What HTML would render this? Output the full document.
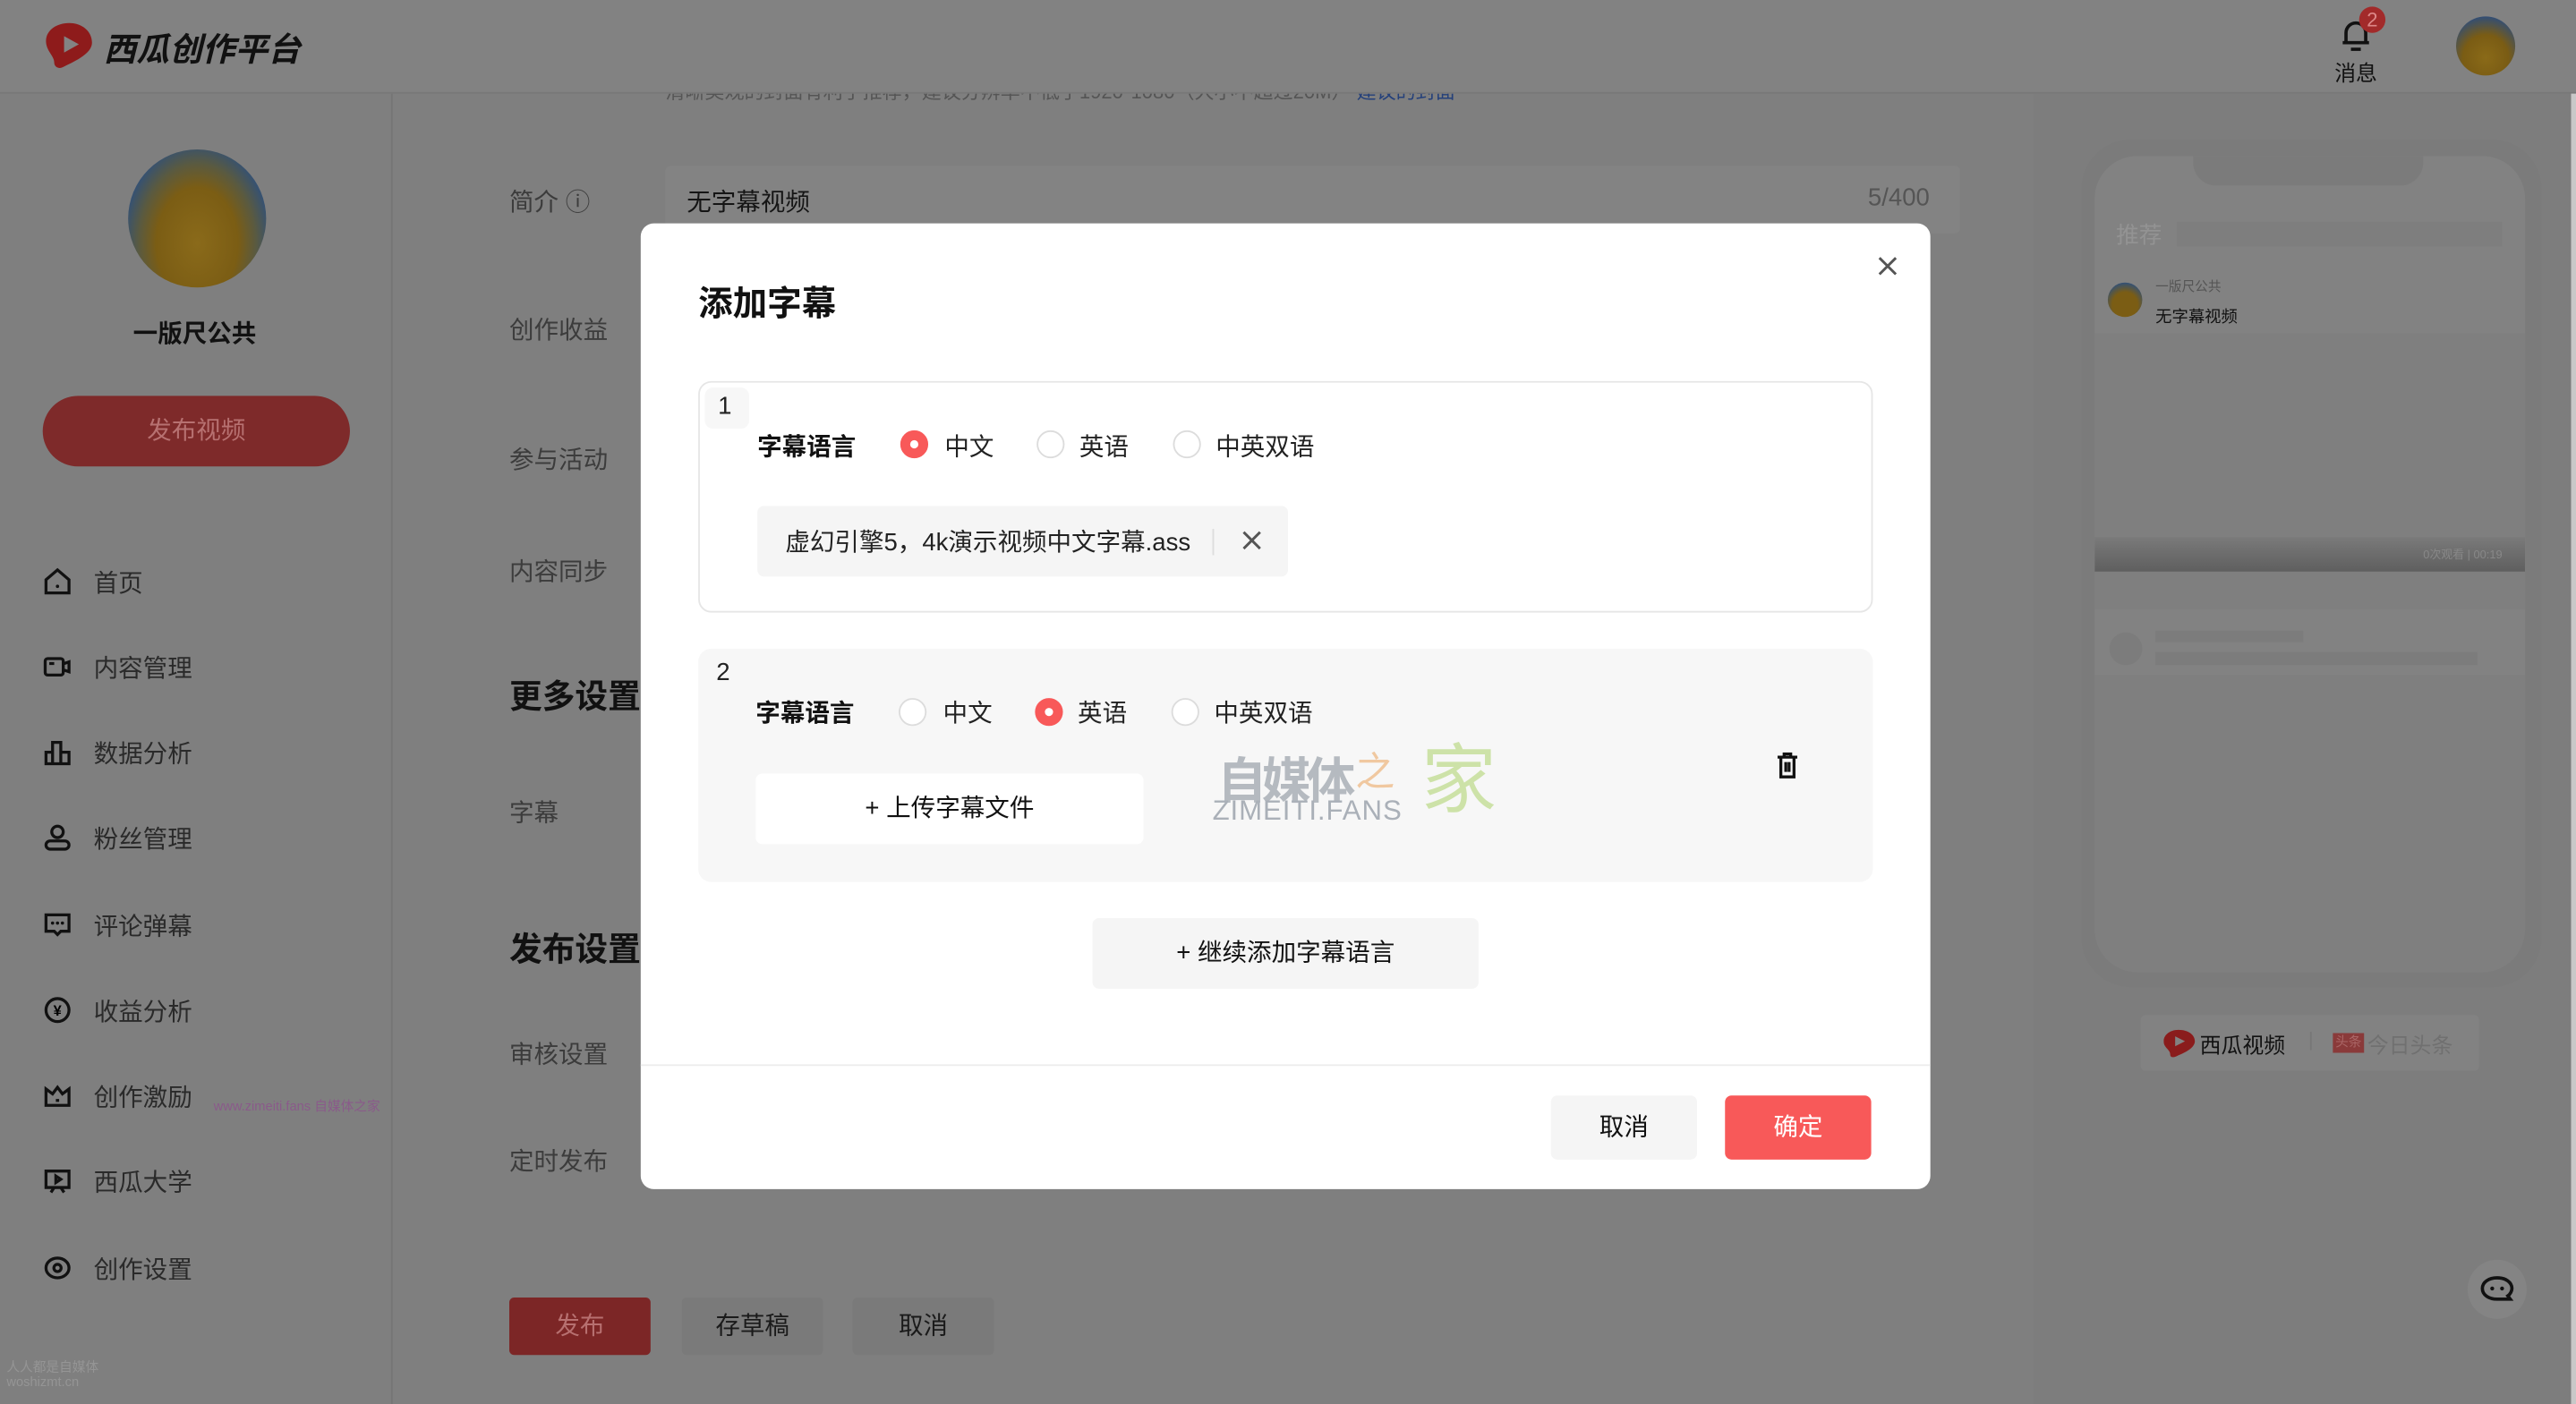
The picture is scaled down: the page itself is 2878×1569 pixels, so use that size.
<!DOCTYPE html>
<html><head><meta charset="utf-8">
<style>
*{margin:0;padding:0;box-sizing:border-box}
html,body{width:2878px;height:1568px;overflow:hidden;background:#7f7f7f}
#w{position:absolute;left:0;top:0;width:1568px;height:855px;transform:scale(1.83546);transform-origin:0 0;font-family:"Liberation Sans","Noto Sans CJK SC",sans-serif;color:#141414;background:#7f7f7f}
.a{position:absolute;white-space:nowrap}
.lbl{font-size:15px;color:#3c3c3c}
.mi{font-size:15px;color:#2a2a2a}
.ic{position:absolute;left:26px;width:18px;height:18px}
.radio{position:absolute;width:17px;height:17px;border-radius:50%;border:1px solid #dcdcdc;background:#fff}
.radio.on{background:#f85959;border-color:#f85959}
.radio.on:after{content:"";position:absolute;left:5px;top:5px;width:5px;height:5px;border-radius:50%;background:#fff}
.t15{font-size:15px;color:#222}
</style></head><body><div id="w">
<!-- clipped hint text (behind header) -->
<div class="a" style="left:405px;top:47px;font-size:12px;color:#555">清晰美观的封面有利于推荐，建议分辨率不低于1920*1080（大小不超过20M） <span style="color:#24407a">建议的封面</span></div>
<!-- top bar -->
<div class="a" style="left:0;top:0;width:1568px;height:57px;background:#828282;border-bottom:1px solid #787878"></div>
<svg class="a" style="left:27px;top:13px" width="32" height="30" viewBox="0 0 32 30"><path d="M15 1C8 1 1 5 1 12c0 6 5 9 5 13 0 3 3 4 5 3 6-3 18-8 18-15C29 6 23 1 15 1z" fill="#8e1b1b"/><path d="M12 9l9 5-9 5z" fill="#838383"/></svg>
<div class="a" style="left:63px;top:14px;font-size:20px;font-weight:bold;color:#111;font-style:italic">西瓜创作平台</div>
<svg class="a" style="left:1424px;top:11px" width="20" height="22" viewBox="0 0 20 22"><path d="M4 15V9a6 6 0 0 1 12 0v6M2 15h16M7 19h6" stroke="#111" stroke-width="2" fill="none"/></svg>
<div class="a" style="left:1436px;top:4px;width:16px;height:16px;border-radius:50%;background:#a22a2a;color:#d88;font-size:12px;text-align:center;line-height:16px">2</div>
<div class="a" style="left:1421px;top:34px;font-size:13px;color:#111">消息</div>
<div class="a" style="left:1495px;top:10px;width:36px;height:36px;border-radius:50%;background:radial-gradient(circle at 50% 70%,#8a6a18 0,#7a5c14 45%,#344e72 80%)"></div>
<!-- sidebar -->
<div class="a" style="left:238px;top:57px;width:1px;height:798px;background:#757575"></div>
<div class="a" style="left:78px;top:91px;width:84px;height:84px;border-radius:50%;background:radial-gradient(ellipse at 50% 68%,#8a6a1a 0,#7b5d14 42%,#5a5a40 60%,#30507a 78%)"></div>
<div class="a" style="left:81px;top:192px;font-size:15px;font-weight:bold;color:#111">一版尺公共</div>
<div class="a" style="left:26px;top:241px;width:187px;height:43px;border-radius:22px;background:#7e2a2a;color:#b77171;font-size:15px;text-align:center;line-height:43px">发布视频</div>
<svg class="ic" style="top:345px" viewBox="0 0 18 18"><path d="M2 8l7-6 7 6v8H2z" stroke="#111" stroke-width="1.8" fill="none"/><circle cx="9" cy="12" r="1" fill="#111"/></svg>
<svg class="ic" style="top:397px" viewBox="0 0 18 18"><rect x="1.5" y="4" width="11" height="10" rx="1.5" stroke="#111" stroke-width="1.8" fill="none"/><path d="M13 7l3-1v6l-3-1M4 7h3" stroke="#111" stroke-width="1.8" fill="none"/></svg>
<svg class="ic" style="top:449px" viewBox="0 0 18 18"><path d="M2 16V9h4V3h5v6h5v7z M6 9v7M11 9v7" stroke="#111" stroke-width="1.8" fill="none"/></svg>
<svg class="ic" style="top:501px" viewBox="0 0 18 18"><circle cx="9" cy="5.5" r="3.5" stroke="#111" stroke-width="1.8" fill="none"/><rect x="2" y="11" width="14" height="5" rx="2.5" stroke="#111" stroke-width="1.8" fill="none"/></svg>
<svg class="ic" style="top:554px" viewBox="0 0 18 18"><path d="M2 3h14v10h-5l-2 2-2-2H2z" stroke="#111" stroke-width="1.8" fill="none"/><circle cx="6" cy="8" r="1" fill="#111"/><circle cx="9" cy="8" r="1" fill="#111"/><circle cx="12" cy="8" r="1" fill="#111"/></svg>
<svg class="ic" style="top:606px" viewBox="0 0 18 18"><circle cx="9" cy="9" r="7" stroke="#111" stroke-width="1.8" fill="none"/><text x="9" y="12.5" font-size="9" text-anchor="middle" font-family="Liberation Sans" font-weight="bold">¥</text></svg>
<svg class="ic" style="top:658px" viewBox="0 0 18 18"><path d="M2 5l4 3 3-4 3 4 4-3v10H2z M8 12h2" stroke="#111" stroke-width="1.8" fill="none"/></svg>
<svg class="ic" style="top:710px" viewBox="0 0 18 18"><path d="M2 3h14v10H2z M5 16l2-3M13 16l-2-3 M8 6l3 2-3 2z" stroke="#111" stroke-width="1.8" fill="none"/></svg>
<svg class="ic" style="top:763px" viewBox="0 0 18 18"><ellipse cx="9" cy="9" rx="7" ry="6" stroke="#111" stroke-width="1.8" fill="none"/><circle cx="9" cy="9" r="2.2" stroke="#111" stroke-width="1.8" fill="none"/></svg>
<div class="a mi" style="left:57px;top:344px">首页</div>
<div class="a mi" style="left:57px;top:396px">内容管理</div>
<div class="a mi" style="left:57px;top:448px">数据分析</div>
<div class="a mi" style="left:57px;top:500px">粉丝管理</div>
<div class="a mi" style="left:57px;top:553px">评论弹幕</div>
<div class="a mi" style="left:57px;top:605px">收益分析</div>
<div class="a mi" style="left:57px;top:657px">创作激励</div>
<div class="a mi" style="left:57px;top:709px">西瓜大学</div>
<div class="a mi" style="left:57px;top:762px">创作设置</div>
<div class="a" style="left:130px;top:668px;font-size:8px;color:#8a5a8a">www.zimeiti.fans 自媒体之家</div>
<div class="a" style="left:4px;top:828px;font-size:8px;color:#959595;line-height:9px">人人都是自媒体<br>woshizmt.cn</div>
<!-- main -->
<div class="a lbl" style="left:310px;top:112px">简介 ⓘ</div>
<div class="a" style="left:405px;top:101px;width:788px;height:41px;background:#838383;border-radius:3px"></div>
<div class="a" style="left:418px;top:112px;font-size:15px;color:#151515">无字幕视频</div>
<div class="a" style="left:1137px;top:112px;font-size:15px;color:#555">5/400</div>
<div class="a lbl" style="left:310px;top:190px">创作收益</div>
<div class="a lbl" style="left:310px;top:269px">参与活动</div>
<div class="a lbl" style="left:310px;top:337px">内容同步</div>
<div class="a" style="left:310px;top:408px;font-size:20px;font-weight:bold;color:#111">更多设置</div>
<div class="a lbl" style="left:310px;top:484px">字幕</div>
<div class="a" style="left:310px;top:562px;font-size:20px;font-weight:bold;color:#111">发布设置</div>
<div class="a lbl" style="left:310px;top:631px">审核设置</div>
<div class="a lbl" style="left:310px;top:696px">定时发布</div>
<div class="a" style="left:310px;top:790px;width:86px;height:35px;background:#7c2626;border-radius:3px;color:#b77070;font-size:15px;text-align:center;line-height:35px">发布</div>
<div class="a" style="left:415px;top:790px;width:86px;height:35px;background:#7a7a7a;border-radius:3px;color:#1a1a1a;font-size:15px;text-align:center;line-height:35px">存草稿</div>
<div class="a" style="left:519px;top:790px;width:86px;height:35px;background:#7a7a7a;border-radius:3px;color:#1a1a1a;font-size:15px;text-align:center;line-height:35px">取消</div>
<!-- right panel -->
<div class="a" style="left:1238px;top:57px;width:327px;height:798px;background:#7d7d7d"></div>
<div class="a" style="left:1565px;top:57px;width:3px;height:798px;background:#c8c8c8"></div>
<div class="a" style="left:1267px;top:85px;width:280px;height:516px;border-radius:30px;background:#7b7b7b"></div>
<div class="a" style="left:1275px;top:95px;width:262px;height:497px;border-radius:26px;background:#7f7f7f;overflow:hidden">
 <div class="a" style="left:0;top:0;width:262px;height:108px;background:#828282"></div>
 <div class="a" style="left:60px;top:-4px;width:140px;height:22px;border-radius:0 0 14px 14px;background:#7b7b7b"></div>
 <div class="a" style="left:13px;top:38px;font-size:14px;color:#939393">推荐</div>
 <div class="a" style="left:50px;top:40px;width:198px;height:15px;background:#7e7e7e"></div>
 <div class="a" style="left:8px;top:77px;width:21px;height:21px;border-radius:50%;background:radial-gradient(circle at 50% 65%,#7b5d14 0,#7b5d14 45%,#30507a 80%)"></div>
 <div class="a" style="left:37px;top:74px;font-size:8px;color:#555">一版尺公共</div>
 <div class="a" style="left:37px;top:89px;font-size:10px;color:#111">无字幕视频</div>
 <div class="a" style="left:0;top:232px;width:262px;height:21px;background:linear-gradient(#7a7a7a,#5f5f5f)"></div>
 <div class="a" style="left:200px;top:238px;font-size:7px;color:#888">0次观看 | 00:19</div>
 <div class="a" style="left:0;top:276px;width:262px;height:40px;background:#828282"></div>
 <div class="a" style="left:9px;top:290px;width:20px;height:20px;border-radius:50%;background:#7c7c7c"></div>
 <div class="a" style="left:37px;top:289px;width:90px;height:7px;background:#7c7c7c"></div>
 <div class="a" style="left:37px;top:302px;width:196px;height:8px;background:#7c7c7c"></div>
</div>
<div class="a" style="left:1303px;top:618px;width:206px;height:34px;background:#828282;border-radius:3px"></div>
<svg class="a" style="left:1317px;top:626px" width="20" height="18" viewBox="0 0 20 18"><path d="M9 1C4 1 0 4 0 8c0 4 4 5 4 8 0 2 2 2 4 1 5-2 11-5 11-9C19 4 15 1 9 1z" fill="#8a1c1c"/><path d="M7 5l6 3-6 3z" fill="#828282"/></svg>
<div class="a" style="left:1339px;top:626px;font-size:13px;color:#111">西瓜视频</div>
<div class="a" style="left:1405px;top:626px;font-size:12px;color:#777">|</div>
<div class="a" style="left:1420px;top:629px;width:19px;height:12px;background:#8a3a3a;font-size:8px;color:#a66;line-height:12px;text-align:center">头条</div>
<div class="a" style="left:1441px;top:626px;font-size:13px;color:#707070">今日头条</div>
<div class="a" style="left:1502px;top:767px;width:36px;height:36px;border-radius:50%;background:#848484"></div>
<svg class="a" style="left:1509px;top:776px" width="22" height="18" viewBox="0 0 22 18"><path d="M11 2C6 2 2 4.5 2 8.5S6 15 11 15h8l-1.5-2C19 12 20 10 20 8.5 20 4.5 16 2 11 2z" stroke="#111" stroke-width="2" fill="none"/><circle cx="8" cy="8.5" r="1.2" fill="#111"/><circle cx="14" cy="8.5" r="1.2" fill="#111"/></svg>
<!-- modal -->
<div class="a" style="left:390px;top:136px;width:785px;height:588px;background:#fff;border-radius:8px">
 <div class="a" style="left:35px;top:33px;font-size:21px;font-weight:bold;color:#111">添加字幕</div>
 <svg class="a" style="left:752px;top:19px" width="14" height="14" viewBox="0 0 14 14"><path d="M2 2l10 10M12 2L2 12" stroke="#555" stroke-width="1.6"/></svg>
 <div class="a" style="left:35px;top:96px;width:715px;height:141px;border:1px solid #e6e6e6;border-radius:8px">
  <div class="a" style="left:3px;top:3px;width:27px;height:25px;background:#f7f7f7;border-radius:5px;font-size:15px;color:#222;padding-left:8px;line-height:23px">1</div>
  <div class="a" style="left:35px;top:28px;font-size:15px;font-weight:bold;color:#111">字幕语言</div>
  <div class="radio on" style="left:122px;top:29px"></div><div class="a t15" style="left:149px;top:28px">中文</div>
  <div class="radio" style="left:205px;top:29px"></div><div class="a t15" style="left:231px;top:28px">英语</div>
  <div class="radio" style="left:288px;top:29px"></div><div class="a t15" style="left:314px;top:28px">中英双语</div>
  <div class="a" style="left:35px;top:75px;width:323px;height:43px;background:#f5f5f5;border-radius:4px"></div>
  <div class="a" style="left:52px;top:86px;font-size:15px;color:#222">虚幻引擎5，4k演示视频中文字幕.ass</div>
  <div class="a" style="left:312px;top:89px;width:1px;height:16px;background:#ddd"></div>
  <svg class="a" style="left:330px;top:90px" width="12" height="12" viewBox="0 0 12 12"><path d="M1 1l10 10M11 1L1 11" stroke="#555" stroke-width="1.6"/></svg>
 </div>
 <div class="a" style="left:35px;top:259px;width:715px;height:142px;background:#f7f7f7;border-radius:8px">
  <div class="a" style="left:11px;top:6px;font-size:15px;color:#222">2</div>
  <div class="a" style="left:35px;top:28px;font-size:15px;font-weight:bold;color:#111">字幕语言</div>
  <div class="radio" style="left:122px;top:30px"></div><div class="a t15" style="left:149px;top:28px">中文</div>
  <div class="radio on" style="left:205px;top:30px"></div><div class="a t15" style="left:231px;top:28px">英语</div>
  <div class="radio" style="left:288px;top:30px"></div><div class="a t15" style="left:314px;top:28px">中英双语</div>
  <div class="a" style="left:35px;top:76px;width:236px;height:43px;background:#fff;border-radius:4px;text-align:center;line-height:43px;font-size:15px;color:#111">+ 上传字幕文件</div>
  <div class="a" style="left:316px;top:56px;font-size:30px;font-weight:bold;color:#b5bac0;letter-spacing:-3px">自媒体</div>
  <div class="a" style="left:400px;top:55px;font-size:24px;color:#f0c8a0">之</div>
  <div class="a" style="left:440px;top:44px;font-size:46px;color:#cde2a8">家</div>
  <div class="a" style="left:313px;top:89px;font-size:17px;color:#aab0b8;letter-spacing:0.5px">ZIMEITI.FANS</div>
  <svg class="a" style="left:656px;top:63px" width="14" height="16" viewBox="0 0 14 16"><path d="M1 3h12M5 3V1h4v2M3 3v12h8V3M6 6v6M8 6v6" stroke="#111" stroke-width="1.8" fill="none"/></svg>
 </div>
 <div class="a" style="left:275px;top:423px;width:235px;height:43px;background:#f5f5f5;border-radius:4px;text-align:center;line-height:43px;font-size:15px;color:#111">+ 继续添加字幕语言</div>
 <div class="a" style="left:0;top:512px;width:785px;height:1px;background:#ececec"></div>
 <div class="a" style="left:554px;top:531px;width:89px;height:39px;background:#f5f5f5;border-radius:4px;text-align:center;line-height:39px;font-size:15px;color:#111">取消</div>
 <div class="a" style="left:660px;top:531px;width:89px;height:39px;background:#f85959;border-radius:4px;text-align:center;line-height:39px;font-size:15px;color:#fff">确定</div>
</div>
</div></body></html>
